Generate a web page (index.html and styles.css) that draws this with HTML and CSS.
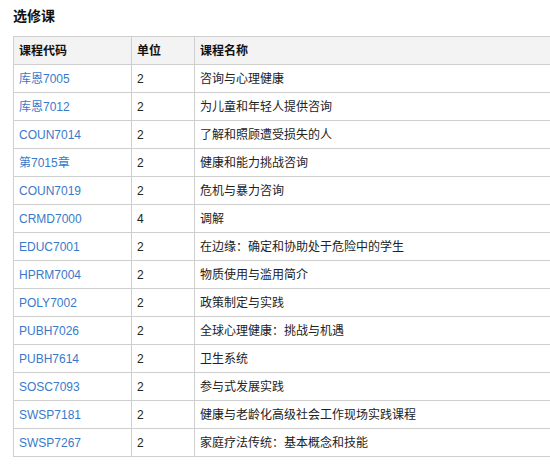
FILE: index.html
```html
<!DOCTYPE html>
<html lang="zh">
<head>
<meta charset="utf-8">
<link rel="stylesheet" href="styles.css">
</head>
<body>
<div class="page">
  <h3 class="title">选修课</h3>
  <table class="courses">
    <colgroup>
      <col class="c-code"><col class="c-unit"><col class="c-name">
    </colgroup>
    <thead>
      <tr><th>课程代码</th><th>单位</th><th>课程名称</th></tr>
    </thead>
    <tbody>
      <tr><td><a href="#">库恩7005</a></td><td>2</td><td>咨询与心理健康</td></tr>
      <tr><td><a href="#">库恩7012</a></td><td>2</td><td>为儿童和年轻人提供咨询</td></tr>
      <tr><td><a href="#">COUN7014</a></td><td>2</td><td>了解和照顾遭受损失的人</td></tr>
      <tr><td><a href="#">第7015章</a></td><td>2</td><td>健康和能力挑战咨询</td></tr>
      <tr><td><a href="#">COUN7019</a></td><td>2</td><td>危机与暴力咨询</td></tr>
      <tr><td><a href="#">CRMD7000</a></td><td>4</td><td>调解</td></tr>
      <tr><td><a href="#">EDUC7001</a></td><td>2</td><td>在边缘：确定和协助处于危险中的学生</td></tr>
      <tr><td><a href="#">HPRM7004</a></td><td>2</td><td>物质使用与滥用简介</td></tr>
      <tr><td><a href="#">POLY7002</a></td><td>2</td><td>政策制定与实践</td></tr>
      <tr><td><a href="#">PUBH7026</a></td><td>2</td><td>全球心理健康：挑战与机遇</td></tr>
      <tr><td><a href="#">PUBH7614</a></td><td>2</td><td>卫生系统</td></tr>
      <tr><td><a href="#">SOSC7093</a></td><td>2</td><td>参与式发展实践</td></tr>
      <tr><td><a href="#">SWSP7181</a></td><td>2</td><td>健康与老龄化高级社会工作现场实践课程</td></tr>
      <tr><td><a href="#">SWSP7267</a></td><td>2</td><td>家庭疗法传统：基本概念和技能</td></tr>
    </tbody>
  </table>
</div>
</body>
</html>
```

FILE: styles.css
```css
html, body {
  margin: 0;
  padding: 0;
  overflow: hidden;
  background: #fff;
}
body {
  font-family: "Liberation Sans", Arial, "Noto Sans CJK SC", sans-serif;
  font-size: 12px;
  color: #222;
}
.page {
  padding: 8px 0 0 13px;
}
.title {
  margin: 0;
  font-size: 14px;
  font-weight: bold;
  line-height: 16px;
  color: #111;
}
.courses {
  margin-top: 12px;
  border-collapse: collapse;
  width: 580px;
}
.c-code { width: 118px; }
.c-unit { width: 63px; }
.courses th,
.courses td {
  border: 1px solid #cfcfcf;
  height: 27px;
  padding: 0 5px;
  text-align: left;
  vertical-align: middle;
  line-height: 16px;
}
.courses th {
  background: #f3f3f3;
  font-weight: bold;
  color: #111;
}
.courses a {
  color: #3a79c9;
  text-decoration: none;
}
```
